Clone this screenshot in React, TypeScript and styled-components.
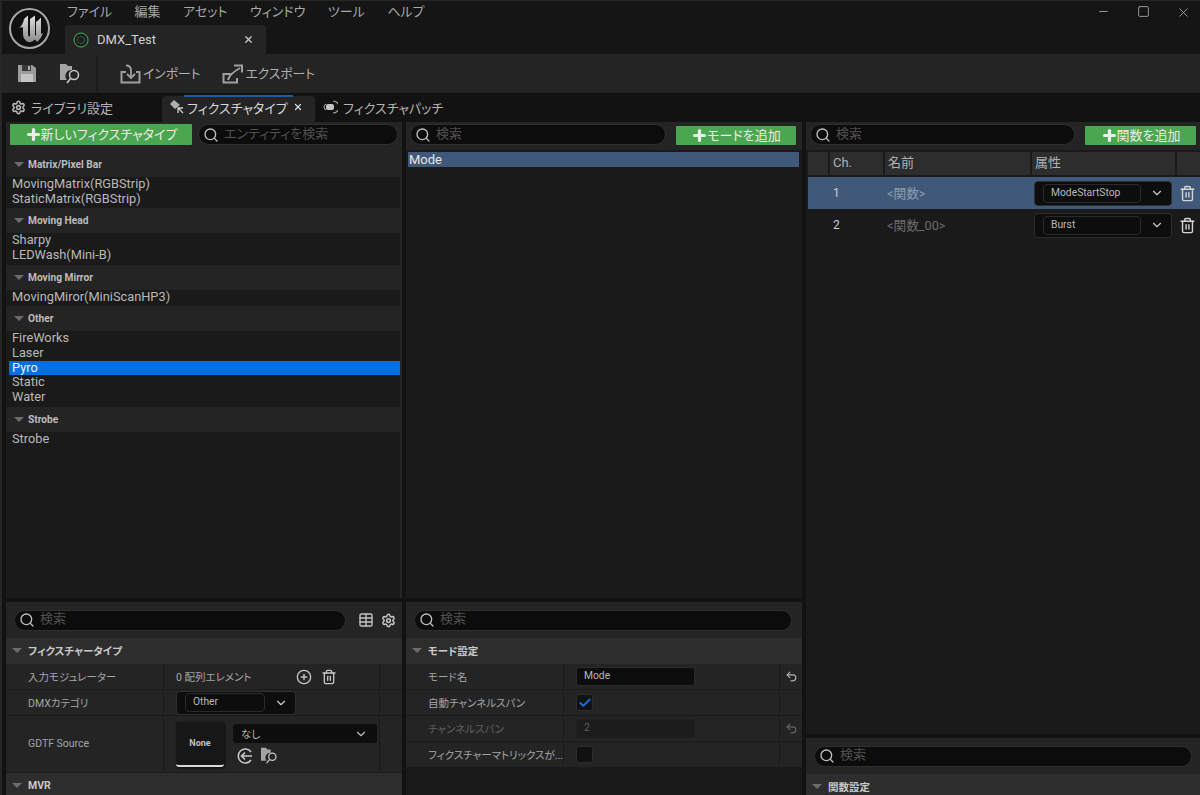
import styled, { createGlobalStyle } from "styled-components";
import { ReactNode } from "react";
import { ChevronDown, Search, Settings, Table, Trash2, Undo2, X, Minus, Square, Plus, CirclePlus, Check } from "lucide-react";

const Global = createGlobalStyle`
  html, body { margin: 0; padding: 0; background: #121212; }
  body {
    font-family: Roboto, "Noto Sans CJK JP", sans-serif;
    font-feature-settings: "palt";
    color: #c0c0c0;
    overflow: hidden;
  }
  * { box-sizing: border-box; }
`;

const Window = styled.div`
  width: 1200px;
  height: 795px;
  display: flex;
  flex-direction: column;
  overflow: hidden;
  background: #121212;
  border-left: 2px solid #262626;
  border-top: 1px solid #262626;
`;

const TitleBar = styled.header`
  height: 53px;
  display: flex;
  background: #151515;
  flex-shrink: 0;
`;
const LogoBox = styled.div`
  width: 63px;
  padding: 6px 0 0 6px;
`;
const TitleMain = styled.div`
  flex: 1;
  display: flex;
  flex-direction: column;
`;
const Menu = styled.nav`
  height: 24px;
  display: flex;
  gap: 22.5px;
  padding: 1px 0 0 2px;
  align-items: flex-start;
  font-size: 13px;
  line-height: 20px;
  color: #a8a8a8;
`;
const DocTab = styled.div`
  width: 201px;
  height: 29px;
  display: flex;
  align-items: center;
  background: #242424;
  border-radius: 4px 4px 0 0;
  padding: 0 12px 0 8px;
  font-size: 13px;
  color: #d0d0d0;
  span { flex: 1; margin-left: 8px; }
`;
const WindowButtons = styled.div`
  display: flex;
  align-items: flex-start;
  gap: 26.5px;
  padding: 4px 9px 0 0;
  color: #a8a8a8;
`;

const Toolbar = styled.div`
  height: 39px;
  background: #242424;
  display: flex;
  align-items: center;
  flex-shrink: 0;
  padding-left: 16px;
  font-size: 12.8px;
  color: #b0b0b0;
`;
const ToolIcon = styled.div<{ $w: number }>`
  width: ${(p) => p.$w}px;
  display: flex;
  align-items: center;
`;
const ToolSep = styled.div`
  width: 2px;
  height: 36px;
  background: #1b1b1b;
  margin: 0 22px 0 0;
`;
const ToolAction = styled.div`
  display: flex;
  align-items: center;
  gap: 2px;
  margin-right: 22px;
  span { position: relative; top: -1px; }
`;

const TabRow = styled.div`
  height: 29px;
  display: flex;
  align-items: flex-end;
  flex-shrink: 0;
  font-size: 13px;
  color: #b4b4b4;
  padding-left: 9px;
`;
const PanelTab = styled.div<{ $active?: boolean; $w: number; $gap?: number }>`
  width: ${(p) => p.$w}px;
  height: 26px;
  display: flex;
  align-items: center;
  gap: ${(p) => (p.$active ? 2 : 5)}px;
  position: relative;
  padding: 0 0 4px ${(p) => (p.$active ? "7px" : "0")};
  margin-left: ${(p) => p.$gap ?? 0}px;
  background: ${(p) => (p.$active ? "#242424" : "transparent")};
  color: ${(p) => (p.$active ? "#d8d8d8" : "#b4b4b4")};
  border-radius: 4px 4px 0 0;
  white-space: nowrap;
  ${(p) =>
    p.$active &&
    `&::before { content: ""; position: absolute; left: 22px; right: 22px; top: -1px; height: 2px; background: #1f5c9e; }`}
`;
const TabClose = styled.div`
  display: flex;
  margin-left: 3px;
`;

const Columns = styled.main`
  flex: 1;
  min-height: 0;
  display: grid;
  grid-template-columns: 396px 396px 394px;
  gap: 4px;
  padding-left: 4px;
`;
const Col = styled.div`
  display: flex;
  flex-direction: column;
  gap: 4px;
  min-height: 0;
`;
const Panel = styled.section<{ $h?: number }>`
  background: #1a1a1a;
  display: flex;
  flex-direction: column;
  overflow: hidden;
  ${(p) => (p.$h ? `height: ${p.$h}px; flex-shrink: 0;` : "flex: 1; min-height: 0;")}
`;
const HeaderBar = styled.div<{ $h: number; $pad: string }>`
  height: ${(p) => p.$h}px;
  flex-shrink: 0;
  background: #242424;
  display: flex;
  align-items: ${(p) => (p.$h > 30 ? "center" : "flex-start")};
  padding: ${(p) => p.$pad};
  gap: 6px;
`;
const AddButton = styled.div<{ $w: number; $h?: number; $top?: number }>`
  width: ${(p) => p.$w}px;
  height: ${(p) => p.$h ?? 19}px;
  margin: ${(p) => p.$top ?? 2}px 0 0 ${(p) => ((p.$top ?? 2) > 0 ? 4 : 0)}px;
  background: #4ba650;
  border-radius: 1px;
  display: flex;
  align-items: center;
  justify-content: center;
  color: #ececec;
  font-size: 13px;
  flex-shrink: 0;
  svg { margin-right: -1px; }
  span { position: relative; top: -1px; }
`;
const SearchBox = styled.div`
  flex: 1;
  height: 21px;
  display: flex;
  align-items: center;
  gap: 5px;
  padding: 0 6px 0 4px;
  background: #0c0c0c;
  border: 1px solid #2f2f2f;
  border-radius: 11px;
  font-size: 13px;
  line-height: 14px;
  color: #505050;
  span { position: relative; top: -1px; }
  svg { color: #c0c0c0; flex-shrink: 0; }
`;

const Tree = styled.div`
  flex: 1;
  padding-top: 2px;
  display: flex;
  flex-direction: column;
  min-height: 0;
  background: #242424;
`;
const GroupHeader = styled.div`
  height: 25px;
  flex-shrink: 0;
  display: flex;
  align-items: center;
  gap: 3px;
  padding-left: 7px;
  font-size: 10.2px;
  font-weight: 700;
  color: #bcbcbc;
`;
const Caret = styled.i`
  display: block;
  width: 0;
  height: 0;
  border-left: 5px solid transparent;
  border-right: 5px solid transparent;
  border-top: 5px solid #6c6c6c;
  margin: 0 1px;
`;
const GroupList = styled.div<{ $fill?: boolean }>`
  background: #1a1a1a;
  padding: 0 2px 2px 3px;
  margin-right: 2px;
  ${(p) => p.$fill && "flex: 1;"}
`;
const ListRow = styled.div<{ $selected?: boolean }>`
  height: 14.67px;
  line-height: 14.67px;
  font-size: 12.8px;
  padding-left: 3px;
  margin-right: -2px;
  color: ${(p) => (p.$selected ? "#f0f0f0" : "#b8b8b8")};
  background: ${(p) => (p.$selected ? "#0070e0" : "transparent")};
`;
const ModeRow = styled.div`
  height: 15px;
  margin: 2px 3px 0 2px;
  padding-left: 1px;
  font-size: 13px;
  line-height: 15px;
  background: #40597a;
  color: #e6e6e6;
`;

const SectionHead = styled.div<{ $h?: number }>`
  height: ${(p) => p.$h ?? 26}px;
  flex-shrink: 0;
  background: #2d2d2d;
  display: flex;
  align-items: center;
  gap: 5px;
  padding: 0 0 1px 5px;
  font-size: 10.5px;
  font-weight: 700;
  color: #c8c8c8;
`;
const PropRow = styled.div<{ $h?: number; $muted?: boolean }>`
  height: ${(p) => p.$h ?? 26}px;
  flex-shrink: 0;
  display: grid;
  grid-template-columns: 158px 216px 22px;
  background: #242424;
  border-bottom: 1px solid #1b1b1b;
  font-size: 10.5px;
  color: ${(p) => (p.$muted ? "#5f5f5f" : "#a4a4a4")};
`;
const PropName = styled.div`
  display: flex;
  align-items: center;
  padding: 0 0 1px 22px;
  border-right: 1px solid #1b1b1b;
  white-space: nowrap;
`;
const PropValue = styled.div`
  display: flex;
  align-items: center;
  padding-left: 12px;
  border-right: 1px solid #1b1b1b;
`;
const PropReset = styled.div<{ $muted?: boolean }>`
  display: flex;
  align-items: center;
  justify-content: center;
  color: ${(p) => (p.$muted ? "#666" : "#b4b4b4")};
`;
const Combo = styled.div<{ $w: number; $h: number }>`
  width: ${(p) => p.$w}px;
  height: ${(p) => p.$h}px;
  background: #0d0d0d;
  border: 1px solid #2e2e2e;
  border-radius: 4px;
  display: flex;
  align-items: center;
  padding: 0 7px 0 8px;
  gap: 9px;
  font-size: 10.3px;
  color: #b8b8b8;
  flex-shrink: 0;
  svg { color: #c8c8c8; flex-shrink: 0; }
`;
const ComboLabel = styled.div<{ $w: number }>`
  width: ${(p) => p.$w}px;
  height: 19px;
  line-height: 16px;
  border: 1px solid #2a2a2a;
  border-radius: 4px;
  padding-left: 7px;
`;
const TextField = styled.div<{ $muted?: boolean }>`
  width: 119px;
  height: 19px;
  background: ${(p) => (p.$muted ? "#1c1c1c" : "#0d0d0d")};
  border: 1px solid ${(p) => (p.$muted ? "#1f1f1f" : "#2a2a2a")};
  border-radius: 3px;
  padding-left: 7px;
  line-height: 15px;
  font-size: 10.3px;
  color: ${(p) => (p.$muted ? "#5f5f5f" : "#b8b8b8")};
`;
const CheckBox = styled.div`
  width: 17px;
  height: 17px;
  background: #111;
  border: 1px solid #2c2c2c;
  border-radius: 3px;
  display: flex;
  align-items: center;
  justify-content: center;
  color: #0f74dc;
`;
const Thumb = styled.div`
  width: 48px;
  height: 45px;
  background: #171717;
  border-radius: 3px;
  border-bottom: 2px solid #d8d8d8;
  box-shadow: 1px 1px 3px #0c0c0c;
  display: flex;
  align-items: center;
  justify-content: center;
  font-size: 9px;
  font-weight: 700;
  color: #c0c0c0;
  flex-shrink: 0;
`;
const AssetSide = styled.div`
  margin-left: 9px;
  display: flex;
  flex-direction: column;
  gap: 4px;
  flex: 1;
`;
const AssetPicker = styled.div`
  width: 144px;
  height: 19px;
  background: #0d0d0d;
  border-radius: 3px;
  display: flex;
  align-items: center;
  justify-content: space-between;
  padding: 0 9px 0 8px;
  color: #b8b8b8;
`;
const AssetIcons = styled.div`
  display: flex;
  align-items: center;
  gap: 8px;
  padding-left: 4px;
  color: #c4c4c4;
`;
const IconGap = styled.div`
  display: flex;
  align-items: center;
  gap: 9px;
  margin-left: 45px;
  color: #c4c4c4;
`;
const SideIcons = styled.div`
  display: flex;
  align-items: center;
  gap: 7px;
  padding-left: 6px;
  color: #c4c4c4;
`;

const ChannelHead = styled.div`
  height: 25px;
  flex-shrink: 0;
  display: grid;
  grid-template-columns: 20px 53px 145px 143px 1fr;
  gap: 2px;
  padding: 2px 0 0 2px;
  background: #1a1a1a;
  font-size: 13px;
  color: #b0b0b0;
`;
const HeadCell = styled.div`
  background: #2d2d2d;
  padding-left: 3px;
  line-height: 22px;
`;
const ChannelRow = styled.div<{ $selected?: boolean }>`
  height: 32px;
  flex-shrink: 0;
  display: grid;
  grid-template-columns: 79px 145px 146px 1fr;
  align-items: center;
  margin-left: 2px;
  margin-top: ${(p) => (p.$selected ? "2px" : "0")};
  background: ${(p) => (p.$selected ? "#40597a" : "transparent")};
  font-size: 12px;
`;
const ChannelNo = styled.div`
  padding-left: 25px;
  color: #cfcfcf;
`;
const ChannelName = styled.div<{ $selected?: boolean }>`
  font-size: 12.7px;
  padding-bottom: 2px;
  color: ${(p) => (p.$selected ? "#8d9db0" : "#6c6c6c")};
`;
const TrashCell = styled.div`
  display: flex;
  justify-content: center;
  color: #d4d4d4;
  padding-right: 3px;
`;
const ComboCell = styled.div`
  padding-left: 2px;
`;

function LogoMark() {
  return (
    <svg width="43" height="43" viewBox="0 0 43 43">
      <defs>
        <linearGradient id="ue" x1="0" y1="0" x2="0" y2="1">
          <stop offset="0" stopColor="#e0e0e0" />
          <stop offset="1" stopColor="#8a8a8a" />
        </linearGradient>
      </defs>
      <circle cx="21.5" cy="21.5" r="19.5" fill="#101010" stroke="#a8a8a8" strokeWidth="2" />
      <path
        d="M11 21 Q15 18 16 12 L20 8.5 V27 Q20 30 22 29.5 V12 L27 8.5 V28 L28 29 V15 Q31 13 33 10.5 V27 L35 26 Q33 32 29 35 L27 32.5 Q23 36.5 19 34.5 Q15 32 15 27 V20.5 Q13 20 11 21 Z"
        fill="url(#ue)"
      />
    </svg>
  );
}

function SaveIcon() {
  return (
    <svg width="18" height="17" viewBox="0 0 18 17">
      <path d="M0 0h14l4 3v14H0z" fill="#9c9c9c" />
      <rect x="4" y="0" width="9" height="6" fill="#3a3a3a" />
      <rect x="10" y="1" width="2" height="4" fill="#b0b0b0" />
      <rect x="3" y="9" width="12" height="8" fill="#c4c4c4" />
    </svg>
  );
}

function FolderFind({ size = 21 }: { size?: number }) {
  return (
    <svg width={size} height={size} viewBox="0 0 21 21">
      <path d="M0 1h6l2 2h4v4a6 6 0 0 0-5 10H0z" fill="#a4a4a4" />
      <circle cx="14" cy="12" r="4.5" fill="#242424" stroke="#c8c8c8" strokeWidth="1.5" />
      <path d="M10.5 15.5L7 20" stroke="#c8c8c8" strokeWidth="1.6" />
    </svg>
  );
}

function ImportIcon() {
  return (
    <svg width="21" height="20" viewBox="0 0 21 20" fill="none" stroke="#a0a0a0" strokeWidth="2">
      <path d="M6 8H1.5v10.5h18V8H16" />
      <path d="M6 1.5c4 0 5 2 5 5v6" strokeWidth="1.8" />
      <path d="M7 10l4 4 4-4" strokeWidth="1.8" />
    </svg>
  );
}

function ExportIcon() {
  return (
    <svg width="21" height="20" viewBox="0 0 21 20" fill="none" stroke="#a0a0a0" strokeWidth="2">
      <path d="M9 10H1.5v8.5H15V14" />
      <path d="M6 16c1-5 5-8 12-12" />
      <path d="M12 1.5h8v7" />
    </svg>
  );
}

function DmxBadge() {
  return (
    <svg width="16" height="16" viewBox="0 0 16 16">
      <circle cx="8" cy="8" r="7" fill="#1c1c1c" stroke="#3dbb5a" strokeWidth="1" />
      <circle cx="8" cy="8" r="3.5" fill="none" stroke="#3f5f48" strokeWidth="1.4" strokeDasharray="1.5 1" />
    </svg>
  );
}

function FixtureIcon() {
  return (
    <svg width="16" height="16" viewBox="0 0 16 16">
      <path d="M1 5l4-4 6 5-5 4z" fill="#b0b0b0" />
      <path d="M9 9l5 5M9 14v-5h5" stroke="#d0d0d0" strokeWidth="1.3" fill="none" />
    </svg>
  );
}

function PatchIcon() {
  return (
    <svg width="16" height="16" viewBox="0 0 16 16" fill="none">
      <rect x="4" y="5" width="8" height="6" rx="2" fill="#c4c4c4" />
      <path d="M11 2a6 6 0 0 1 0 12M2 8a4 4 0 0 1 2-3M2 8a4 4 0 0 0 2 3" stroke="#a0a0a0" strokeWidth="1.1" />
    </svg>
  );
}

function BackCircle() {
  return (
    <svg width="16" height="16" viewBox="0 0 16 16" fill="none" stroke="#c8c8c8" strokeWidth="1.6">
      <path d="M14 4A7 7 0 1 0 14 12" />
      <path d="M15 8H5M8 4.5L4.5 8 8 11.5" />
    </svg>
  );
}

function GroupBlock({ title, items, selected, fill }: { title: string; items: string[]; selected?: string; fill?: boolean }) {
  return (
    <>
      <GroupHeader>
        <Caret />
        {title}
      </GroupHeader>
      <GroupList $fill={fill}>
        {items.map((item) => (
          <ListRow key={item} $selected={item === selected}>
            {item}
          </ListRow>
        ))}
      </GroupList>
    </>
  );
}

function Find({ text }: { text?: string }) {
  return (
    <SearchBox>
      <Search size={16} strokeWidth={2} />
      <span>{text ?? "検索"}</span>
    </SearchBox>
  );
}

function Add({ w, h, top, children }: { w: number; h?: number; top?: number; children: ReactNode }) {
  return (
    <AddButton $w={w} $h={h} $top={top}>
      <Plus size={17} strokeWidth={4.5} />
      <span>{children}</span>
    </AddButton>
  );
}

function ChannelCombo({ label }: { label: string }) {
  return (
    <Combo $w={138} $h={25}>
      <ComboLabel $w={100}>{label}</ComboLabel>
      <ChevronDown size={14} />
    </Combo>
  );
}

export default function App() {
  return (
    <Window>
      <Global />
      <TitleBar>
        <LogoBox>
          <LogoMark />
        </LogoBox>
        <TitleMain>
          <Menu>
            <span>ファイル</span>
            <span>編集</span>
            <span>アセット</span>
            <span>ウィンドウ</span>
            <span>ツール</span>
            <span>ヘルプ</span>
          </Menu>
          <DocTab>
            <DmxBadge />
            <span>DMX_Test</span>
            <X size={11} strokeWidth={2.6} />
          </DocTab>
        </TitleMain>
        <WindowButtons>
          <Minus size={13} strokeWidth={1.6} />
          <Square size={13} strokeWidth={1.6} />
          <X size={15} strokeWidth={1.4} />
        </WindowButtons>
      </TitleBar>

      <Toolbar>
        <ToolIcon $w={42}>
          <SaveIcon />
        </ToolIcon>
        <ToolIcon $w={36}>
          <FolderFind />
        </ToolIcon>
        <ToolSep />
        <ToolAction>
          <ImportIcon />
          <span>インポート</span>
        </ToolAction>
        <ToolAction>
          <ExportIcon />
          <span>エクスポート</span>
        </ToolAction>
      </Toolbar>

      <TabRow>
        <PanelTab $w={151}>
          <Settings size={15} strokeWidth={2.6} />
          ライブラリ設定
        </PanelTab>
        <PanelTab $active $w={153}>
          <FixtureIcon />
          フィクスチャタイプ
          <TabClose>
            <X size={10} strokeWidth={3} />
          </TabClose>
        </PanelTab>
        <PanelTab $w={130} $gap={7}>
          <PatchIcon />
          フィクスチャパッチ
        </PanelTab>
      </TabRow>

      <Columns>
        <Col>
          <Panel>
            <HeaderBar $h={28} $pad="2px 4px 0 4px">
              <Add w={182} h={21} top={0}>新しいフィクスチャタイプ</Add>
              <Find text="エンティティを検索" />
            </HeaderBar>
            <Tree>
              <GroupBlock title="Matrix/Pixel Bar" items={["MovingMatrix(RGBStrip)", "StaticMatrix(RGBStrip)"]} />
              <GroupBlock title="Moving Head" items={["Sharpy", "LEDWash(Mini-B)"]} />
              <GroupBlock title="Moving Mirror" items={["MovingMiror(MiniScanHP3)"]} />
              <GroupBlock title="Other" items={["FireWorks", "Laser", "Pyro", "Static", "Water"]} selected="Pyro" />
              <GroupBlock title="Strobe" items={["Strobe"]} fill />
            </Tree>
          </Panel>
          <Panel $h={193}>
            <HeaderBar $h={36} $pad="0 6px 0 8px">
              <Find />
              <SideIcons>
                <Table size={16} />
                <Settings size={15} strokeWidth={2.4} />
              </SideIcons>
            </HeaderBar>
            <SectionHead>
              <Caret />
              フィクスチャータイプ
            </SectionHead>
            <PropRow>
              <PropName>入力モジュレーター</PropName>
              <PropValue>
                0 配列エレメント
                <IconGap>
                  <CirclePlus size={16} />
                  <Trash2 size={16} />
                </IconGap>
              </PropValue>
              <div />
            </PropRow>
            <PropRow>
              <PropName>DMXカテゴリ</PropName>
              <PropValue>
                <Combo $w={120} $h={24}>
                  <ComboLabel $w={82}>Other</ComboLabel>
                  <ChevronDown size={14} />
                </Combo>
              </PropValue>
              <div />
            </PropRow>
            <PropRow $h={57}>
              <PropName>GDTF Source</PropName>
              <PropValue>
                <Thumb>None</Thumb>
                <AssetSide>
                  <AssetPicker>
                    なし
                    <ChevronDown size={14} />
                  </AssetPicker>
                  <AssetIcons>
                    <BackCircle />
                    <FolderFind size={17} />
                  </AssetIcons>
                </AssetSide>
              </PropValue>
              <div />
            </PropRow>
            <SectionHead>
              <Caret />
              MVR
            </SectionHead>
          </Panel>
        </Col>

        <Col>
          <Panel>
            <HeaderBar $h={28} $pad="2px 6px 0 4px">
              <Find />
              <Add w={120}>モードを追加</Add>
            </HeaderBar>
            <ModeRow>Mode</ModeRow>
          </Panel>
          <Panel $h={193}>
            <HeaderBar $h={36} $pad="0 10px 0 8px">
              <Find />
            </HeaderBar>
            <SectionHead>
              <Caret />
              モード設定
            </SectionHead>
            <PropRow>
              <PropName>モード名</PropName>
              <PropValue>
                <TextField>Mode</TextField>
              </PropValue>
              <PropReset>
                <Undo2 size={13} />
              </PropReset>
            </PropRow>
            <PropRow>
              <PropName>自動チャンネルスパン</PropName>
              <PropValue>
                <CheckBox>
                  <Check size={14} strokeWidth={3.2} />
                </CheckBox>
              </PropValue>
              <div />
            </PropRow>
            <PropRow $muted>
              <PropName>チャンネルスパン</PropName>
              <PropValue>
                <TextField $muted>2</TextField>
              </PropValue>
              <PropReset $muted>
                <Undo2 size={13} />
              </PropReset>
            </PropRow>
            <PropRow>
              <PropName>フィクスチャーマトリックスが...</PropName>
              <PropValue>
                <CheckBox />
              </PropValue>
              <div />
            </PropRow>
          </Panel>
        </Col>

        <Col>
          <Panel>
            <HeaderBar $h={28} $pad="2px 4px 0 4px">
              <Find />
              <Add w={111}>関数を追加</Add>
            </HeaderBar>
            <ChannelHead>
              <HeadCell />
              <HeadCell>Ch.</HeadCell>
              <HeadCell>名前</HeadCell>
              <HeadCell>属性</HeadCell>
              <HeadCell />
            </ChannelHead>
            <ChannelRow $selected>
              <ChannelNo>1</ChannelNo>
              <ChannelName $selected>&lt;関数&gt;</ChannelName>
              <ComboCell>
                <ChannelCombo label="ModeStartStop" />
              </ComboCell>
              <TrashCell>
                <Trash2 size={17} />
              </TrashCell>
            </ChannelRow>
            <ChannelRow>
              <ChannelNo>2</ChannelNo>
              <ChannelName>&lt;関数_00&gt;</ChannelName>
              <ComboCell>
                <ChannelCombo label="Burst" />
              </ComboCell>
              <TrashCell>
                <Trash2 size={17} />
              </TrashCell>
            </ChannelRow>
          </Panel>
          <Panel $h={57}>
            <HeaderBar $h={36} $pad="0 8px 0 8px">
              <Find />
            </HeaderBar>
            <SectionHead>
              <Caret />
              関数設定
            </SectionHead>
          </Panel>
        </Col>
      </Columns>
    </Window>
  );
}
